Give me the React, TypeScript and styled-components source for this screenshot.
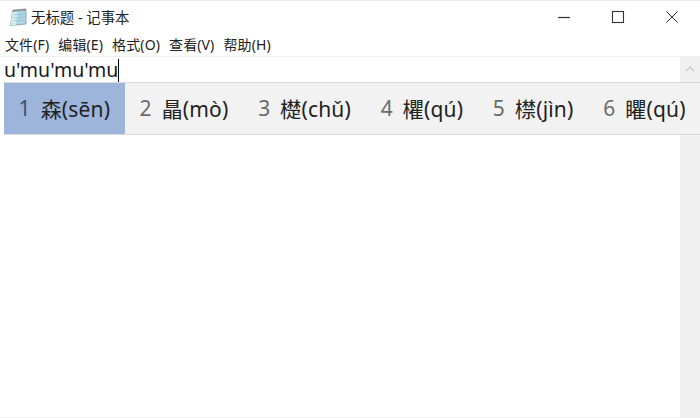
import styled, { createGlobalStyle } from 'styled-components';

const candidates = [
	{ index: 1, word: '森', pinyin: 'sēn' },
	{ index: 2, word: '瞐', pinyin: 'mò' },
	{ index: 3, word: '檚', pinyin: 'chǔ' },
	{ index: 4, word: '欋', pinyin: 'qú' },
	{ index: 5, word: '㯲', pinyin: 'jìn' },
	{ index: 6, word: '䂂', pinyin: 'qú' },
];

const menus = ['文件(F)', '编辑(E)', '格式(O)', '查看(V)', '帮助(H)'];

const GlobalStyle = createGlobalStyle`
	html, body {
		margin: 0;
		padding: 0;
		background: #fff;
	}
	body {
		font-family: "Noto Sans", "Noto Sans CJK SC", sans-serif;
		overflow: hidden;
	}
`;

const Window = styled.div`
	position: relative;
	width: 700px;
	height: 418px;
	display: flex;
	flex-direction: column;
	background: #fff;
	overflow: hidden;
`;

const TitleBar = styled.div`
	height: 35px;
	display: flex;
	align-items: center;
	padding: 0 0 2px 9px;
	box-sizing: border-box;
	border-top: 1px solid #ececec;
`;

const Title = styled.span`
	margin: 0 0 1px 2px;
	font-size: 14.4px;
	color: #222;
`;

const WindowButtons = styled.div`
	margin-left: auto;
	display: flex;
	padding-right: 1px;
`;

const WindowButton = styled.div`
	width: 54px;
	height: 32px;
	display: flex;
	align-items: center;
	justify-content: center;
`;

const MenuBar = styled.div`
	height: 21px;
	display: flex;
	align-items: center;
	gap: 9px;
	padding: 0 0 3px 5px;
	box-sizing: border-box;
	font-size: 14px;
	letter-spacing: 0.12px;
	color: #222;
`;

const Body = styled.div`
	flex: 1;
	display: flex;
	border-top: 1px solid #f0f0f0;
`;

const Editor = styled.div`
	flex: 1;
	padding-left: 4px;
	font-size: 19.5px;
	line-height: 25px;
	color: #1a1a1a;
`;

const Caret = styled.span`
	display: inline-block;
	width: 1px;
	height: 23px;
	background: #000;
	vertical-align: -5px;
`;

const Scrollbar = styled.div`
	width: 20px;
	background: #f0f0f0;
	display: flex;
	justify-content: center;
	padding-top: 9px;
	box-sizing: border-box;
`;

const BottomEdge = styled.div`
	height: 1px;
	background: #f0f0f0;
`;

const CandidateBar = styled.div`
	position: absolute;
	left: 4px;
	right: 0;
	top: 82px;
	height: 53px;
	box-sizing: border-box;
	display: flex;
	background: #f2f2f2;
	border-top: 1px solid #d9d9d9;
	border-bottom: 1px solid #d9d9d9;
`;

const Candidate = styled.div<{ $active?: boolean }>`
	display: flex;
	align-items: center;
	padding: 0 ${p => (p.$active ? '14.5px' : '14.9px')} 2px;
	font-size: 21px;
	letter-spacing: 0.15px;
	color: #222;
	white-space: nowrap;
	background: ${p => (p.$active ? '#9db5da' : 'transparent')};
`;

const Index = styled.span<{ $active?: boolean }>`
	margin-right: 10px;
	color: ${p => (p.$active ? '#42506a' : '#6b6b6b')};
`;

const NotepadIcon = () => (
	<svg width='20' height='20' viewBox='0 0 20 20'>
		<path d='M3.5 4 L17 2.5 L17 17 L1.5 18.5 Z' fill='#a9d6e2' stroke='#7f97a5' strokeWidth='0.8' />
		<path d='M3.5 4 L9 3.4 L7 18 L1.5 18.5 Z' fill='#d3ecef' />
		<path d='M3.5 2.8 L17 1.4 L17 3.6 L3.5 5 Z' fill='#8b9499' />
		<path d='M5 8 L15.5 7 M4.6 11 L15.3 10 M4.3 14 L15 13' stroke='#8fbccb' strokeWidth='0.7' />
	</svg>
);

const App = () => (
	<>
		<GlobalStyle />
		<Window>
			<TitleBar>
				<NotepadIcon />
				<Title>无标题 - 记事本</Title>
				<WindowButtons>
					<WindowButton>
						<svg width='14' height='14' viewBox='0 0 14 14'>
							<path d='M1 7.5 H13' stroke='#333' strokeWidth='1.2' />
						</svg>
					</WindowButton>
					<WindowButton>
						<svg width='14' height='14' viewBox='0 0 14 14'>
							<rect x='1.5' y='1.5' width='11' height='11' fill='none' stroke='#333' strokeWidth='1.1' />
						</svg>
					</WindowButton>
					<WindowButton>
						<svg width='14' height='14' viewBox='0 0 14 14'>
							<path d='M1.5 1.5 L12.5 12.5 M12.5 1.5 L1.5 12.5' stroke='#333' strokeWidth='1' />
						</svg>
					</WindowButton>
				</WindowButtons>
			</TitleBar>
			<MenuBar>
				{menus.map(menu => (
					<span key={menu}>{menu}</span>
				))}
			</MenuBar>
			<Body>
				<Editor>
					u'mu'mu'mu
					<Caret />
				</Editor>
				<Scrollbar>
					<svg width='10' height='6' viewBox='0 0 10 6'>
						<path d='M1 5 L5 1 L9 5' fill='none' stroke='#c4c4c4' strokeWidth='1.2' />
					</svg>
				</Scrollbar>
			</Body>
			<BottomEdge />
			<CandidateBar>
				{candidates.map(c => (
					<Candidate key={c.index} $active={c.index === 1}>
						<Index $active={c.index === 1}>{c.index}</Index>
						{c.word}({c.pinyin})
					</Candidate>
				))}
			</CandidateBar>
		</Window>
	</>
);

export default App;
